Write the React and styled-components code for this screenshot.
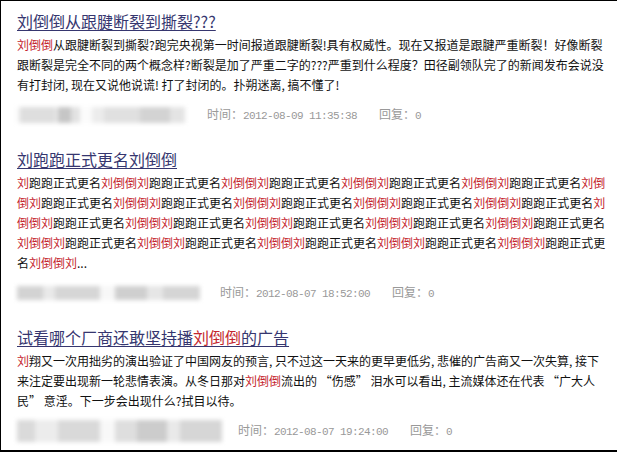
import React from "react";
import styled, { createGlobalStyle } from "styled-components";

const unit = "刘跑跑正式更名刘倒倒";
const renamed = unit.repeat(20) + "刘";
const renamedLines = [0, 49, 98, 147, 196].map((i) => renamed.slice(i, i + 49));
renamedLines[4] += "...";

const posts = [
  {
    title: "刘倒倒从跟腱断裂到撕裂???",
    lines: [
      "刘倒倒从跟腱断裂到撕裂?跑完央视第一时间报道跟腱断裂!具有权威性。现在又报道是跟腱严重断裂！好像断裂",
      "跟断裂是完全不同的两个概念样?断裂是加了严重二字的???严重到什么程度？田径副领队完了的新闻发布会说没",
      "有打封闭, 现在又说他说谎! 打了封闭的。扑朔迷离, 搞不懂了!",
    ],
    time: "2012-08-09 11:35:38",
    timeGap: 22,
    blurHeight: 16,
    blur: [
      [3, "#f4f4f4"], [35, "#dedede"], [3, "#e8e8e8"], [13, "#c6c6c6"], [9, "#e2e2e2"],
      [12, "#fbfbfb"], [12, "#ececec"], [36, "#e0e0e0"], [30, "#d3d3d3"], [15, "#e4e4e4"],
    ],
  },
  {
    title: "刘跑跑正式更名刘倒倒",
    lines: renamedLines,
    time: "2012-08-07 18:52:00",
    timeGap: 20,
    blurHeight: 14,
    blur: [
      [26, "#d3d3d3"], [12, "#e9e9e9"], [45, "#d6d6d6"], [15, "#f7f7f7"],
      [32, "#cfcfcf"], [16, "#e6e6e6"], [37, "#d5d5d5"],
    ],
  },
  {
    title: "试看哪个厂商还敢坚持播刘倒倒的广告",
    markTitle: true,
    lines: [
      "刘翔又一次用拙劣的演出验证了中国网友的预言, 只不过这一天来的更早更低劣, 悲催的广告商又一次失算, 接下",
      "来注定要出现新一轮悲情表演。从冬日那对刘倒倒流出的 “伤感” 泪水可以看出, 主流媒体还在代表 “广大人",
      "民” 意淫。下一步会出现什么?拭目以待。",
    ],
    time: "2012-08-07 19:24:00",
    timeGap: 16,
    blurHeight: 22,
    blur: [
      [18, "#dadada"], [23, "#ececec"], [42, "#d9d9d9"], [15, "#f8f8f8"],
      [22, "#dedede"], [30, "#cccccc"], [13, "#e9e9e9"], [42, "#d6d6d6"],
    ],
  },
];

// keyword highlight: every 刘 / 倒 run is red
const highlight = (text) =>
  text.split(/([刘倒]+)/).map((part, i) =>
    /^[刘倒]+$/.test(part) ? <Hl key={i}>{part}</Hl> : part
  );

const App = () => (
  <>
    <GlobalStyle />
    <Frame>
      {posts.map((post) => (
        <Post key={post.time}>
          <Title href="#">{post.markTitle ? highlight(post.title) : post.title}</Title>
          <Body>
            {post.lines.map((line, i) => (
              <React.Fragment key={i}>
                {i > 0 && <br />}
                {highlight(line)}
              </React.Fragment>
            ))}
          </Body>
          <Meta>
            <BlurGroup $h={post.blurHeight}>
              {post.blur.map(([w, c], i) => (
                <Smudge key={i} $w={w} $c={c} />
              ))}
            </BlurGroup>
            <Stamp $gap={post.timeGap}>
              时间：<Digits>{post.time}</Digits>
            </Stamp>
            <Stamp $gap={22}>
              回复：<Digits>0</Digits>
            </Stamp>
          </Meta>
        </Post>
      ))}
    </Frame>
  </>
);

const GlobalStyle = createGlobalStyle`
  body {
    margin: 0;
    background: #fff;
    font-family: "Noto Sans CJK SC", "Liberation Sans", sans-serif;
  }
`;

const Frame = styled.div`
  box-sizing: border-box;
  height: 452px;
  border-top: 1px solid #000;
  border-left: 1px solid #000;
  border-bottom: 2px solid #000;
  padding: 10px 0 0 16px;
  display: flex;
  flex-direction: column;
  gap: 26px;
  overflow: hidden;
`;

const Post = styled.div`
  display: flex;
  flex-direction: column;
  align-items: flex-start;
`;

const Title = styled.a`
  color: #36366f;
  font-size: 16px;
  line-height: 20px;
  text-decoration: underline;
  text-underline-offset: 2px;
`;

const Hl = styled.span`
  color: #c4262e;
`;

const Body = styled.p`
  margin: 4px 0 0;
  color: #111;
  font-size: 12px;
  line-height: 20px;
  white-space: nowrap;
`;

const Meta = styled.div`
  margin-top: 8px;
  height: 20px;
  display: flex;
  align-items: center;
  color: #999;
  font-size: 12px;
`;

const BlurGroup = styled.div`
  display: flex;
  height: ${({ $h }) => $h}px;
  margin-top: 4px;
  filter: blur(2px);
`;

const Smudge = styled.span`
  width: ${({ $w }) => $w}px;
  background: ${({ $c }) => $c};
`;

const Stamp = styled.span`
  margin-left: ${({ $gap }) => $gap}px;
  white-space: nowrap;
`;

const Digits = styled.span`
  font-family: "Liberation Mono", monospace;
  font-size: 11px;
  letter-spacing: -0.6px;
`;

export default App;
